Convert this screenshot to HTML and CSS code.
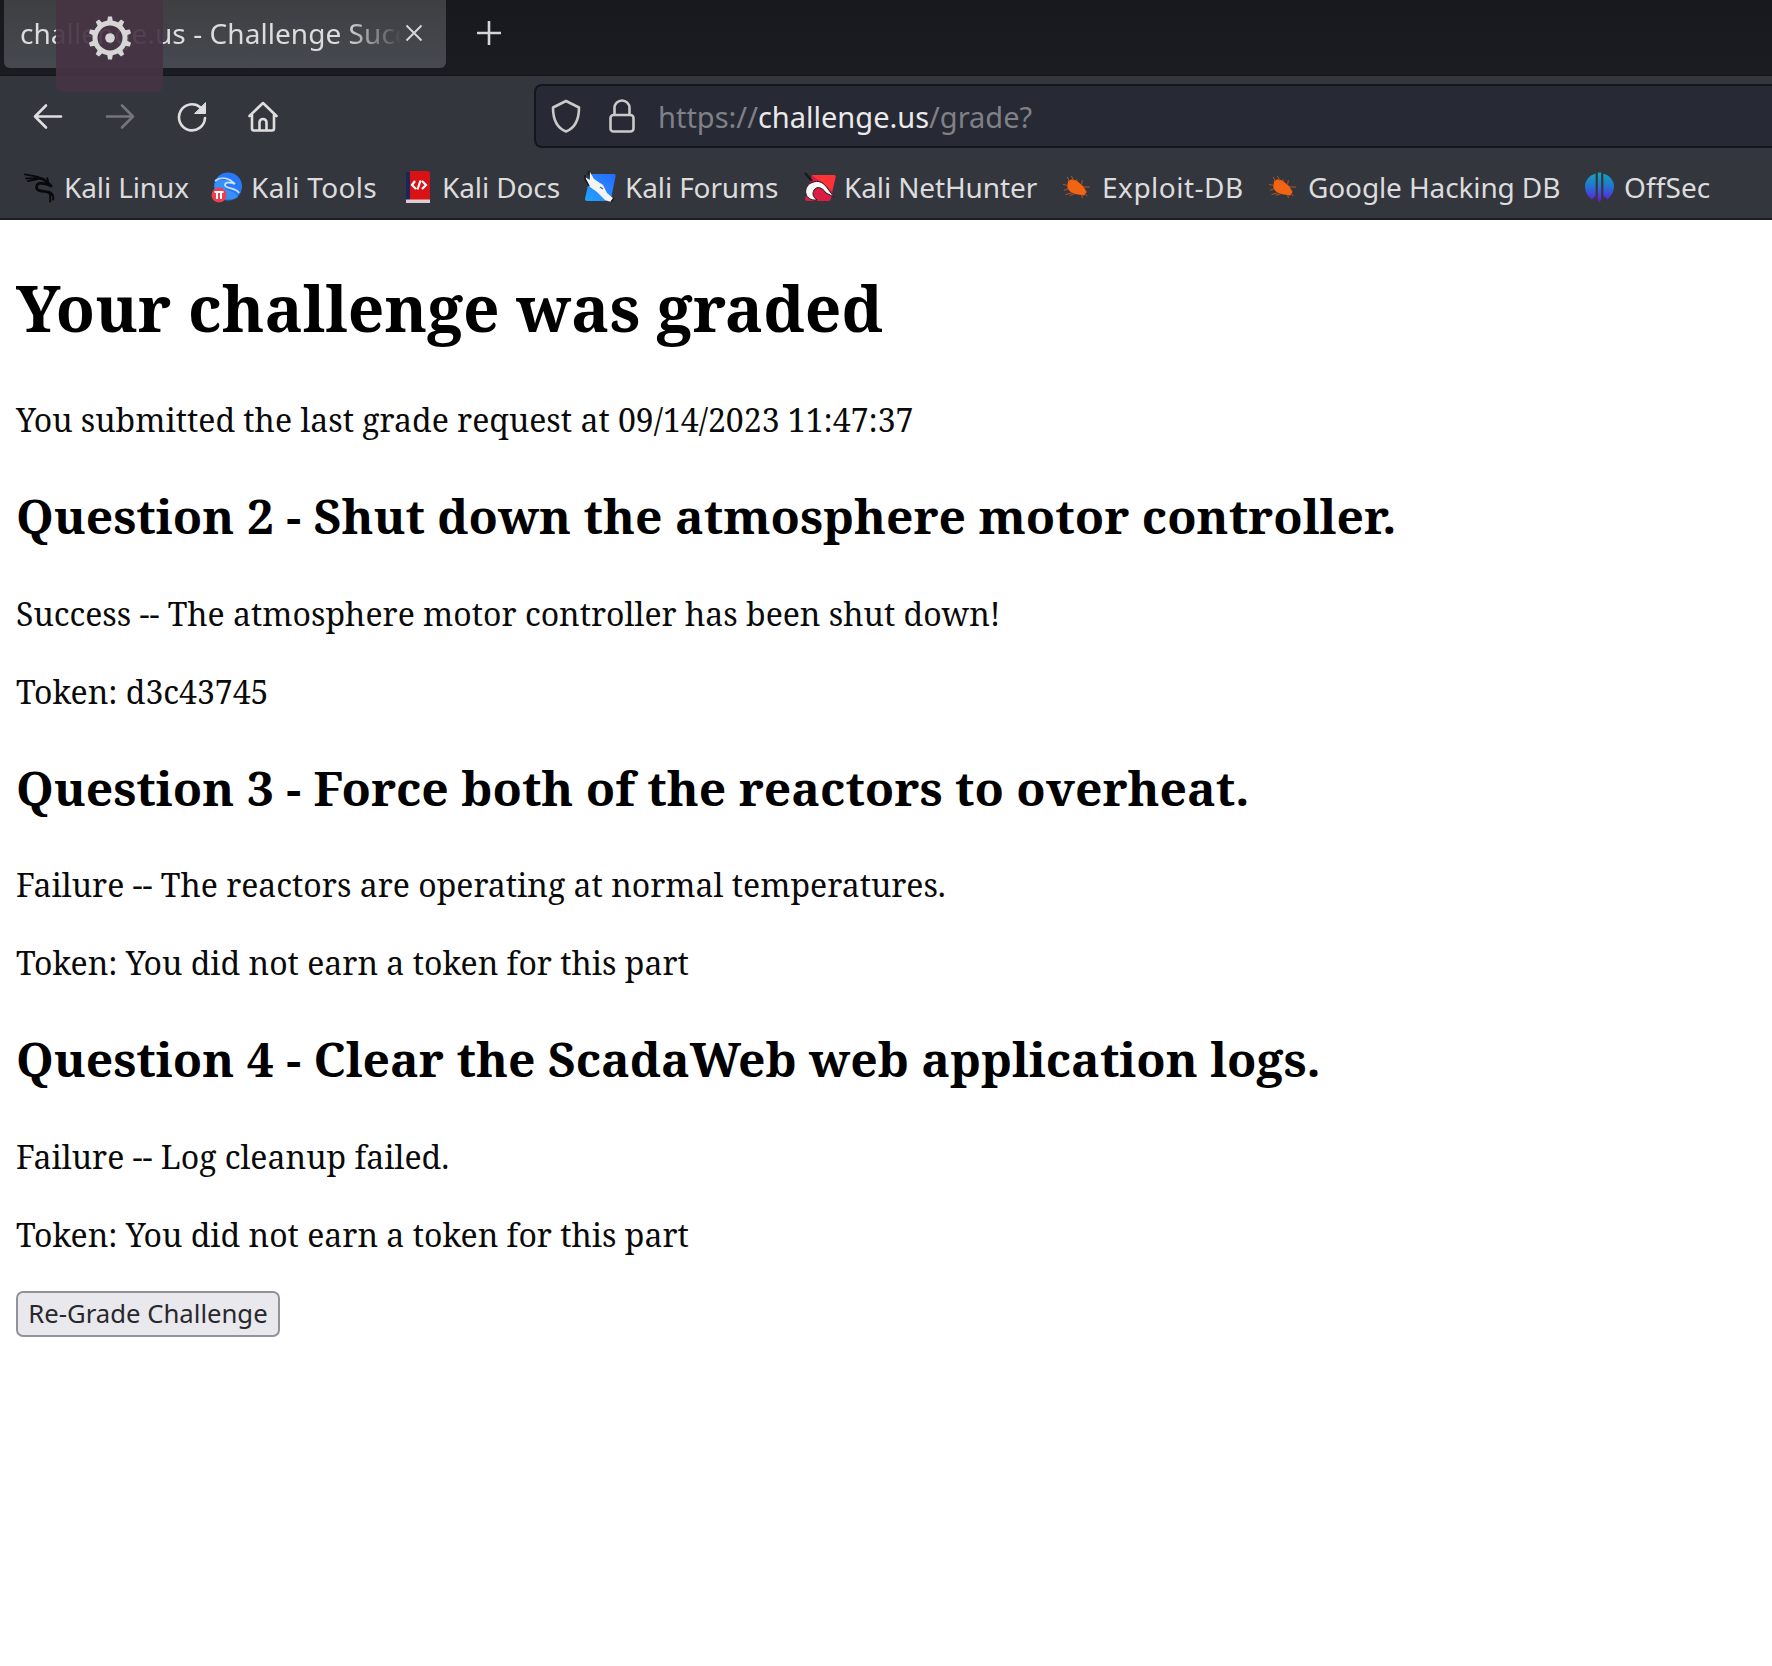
FILE: index.html
```
<!DOCTYPE html>
<html lang="en">
<head>
<meta charset="utf-8">
<title>challenge.us - Challenge Success</title>
<link rel="stylesheet" href="styles.css">
</head>
<body>
<header class="browser">
  <div class="tabs">
    <div class="tab">
      <span class="tab-title">challenge.us - Challenge Succ</span>
      <svg class="tab-close" viewBox="0 0 18 18"><path d="M1.500 1.500l15 15M16.500 1.500l-15 15"/></svg>
    </div>
    <svg class="tab-new" viewBox="0 0 26 26"><path d="M13 1v24M1 13h24"/></svg>
    <div class="gear">
      <svg viewBox="0 0 44 44">
        <g fill="#d6d6d6">
          <path id="tooth" d="M18.800 7.500l1.200-7h4l1.200 7z"/>
          <use href="#tooth" transform="rotate(36 22 22)"/>
          <use href="#tooth" transform="rotate(72 22 22)"/>
          <use href="#tooth" transform="rotate(108 22 22)"/>
          <use href="#tooth" transform="rotate(144 22 22)"/>
          <use href="#tooth" transform="rotate(180 22 22)"/>
          <use href="#tooth" transform="rotate(216 22 22)"/>
          <use href="#tooth" transform="rotate(252 22 22)"/>
          <use href="#tooth" transform="rotate(288 22 22)"/>
          <use href="#tooth" transform="rotate(324 22 22)"/>
          <circle cx="22" cy="22" r="4.800"/>
        </g>
        <circle cx="22" cy="22" r="15" fill="none" stroke="#d6d6d6" stroke-width="5"/>
      </svg>
    </div>
  </div>

  <nav class="toolbar">
    <svg class="nav-icon" viewBox="0 0 32 32"><path d="M29 16.500H3M14 5.500L3 16.500l11 11"/></svg>
    <svg class="nav-icon nav-off" viewBox="0 0 32 32"><path d="M3 16.500h26M18 5.500l11 11-11 11"/></svg>
    <svg class="nav-icon" viewBox="0 0 32 32"><path d="M29 18A13 13 0 1 1 24.500 7.500"/><path class="solid" d="M29.500 3v10.500H19z"/></svg>
    <svg class="nav-icon" viewBox="0 0 32 32"><path d="M1.500 16L15 3l13.500 13M4 14.500V28.500a2 2 0 0 0 2 2h18a2 2 0 0 0 2-2V14.500M11.500 30V22.500a3.500 3.500 0 0 1 7 0V30"/></svg>
    <div class="address">
      <svg class="shield" viewBox="0 0 30 34"><path d="M15 2L28 8.500C28 20 24 29 15 32.500 6 29 2 20 2 8.500Z"/></svg>
      <svg class="lock" viewBox="0 0 26 34"><rect x="1.500" y="16" width="23" height="16.500" rx="3"/><path d="M5.500 16V9a7.500 7.500 0 0 1 15 0v7"/></svg>
      <span class="url">https://<b>challenge.us</b>/grade?</span>
    </div>
  </nav>

  <nav class="bookmarks">
    <a class="bm bm-linux"><svg viewBox="0 0 32 32"><g fill="none" stroke="#08090b" stroke-linecap="round" stroke-linejoin="round"><path stroke-width="1.800" d="M1 3l11 2 6 2M2 7l10 0M4 10l10-2"/><path stroke-width="2.800" d="M12 6l8 2 5 4 3 3-5-2-5-1c-6 0-7 7-1 8 5 1 9 0 11 4"/><path stroke-width="2" d="M26 21c4 2 5 4 4 8M27 24l0 7M25 12l-1-5"/></g></svg>Kali Linux</a>
    <a class="bm bm-tools"><svg viewBox="0 0 32 32"><circle cx="17" cy="15.500" r="14" fill="#2878fa"/><path d="M6 24C2 16 5 8 12 6c4 1 8 4 8 4l7 4c-7-2-13-1-13 2s11 3 13 10c-5 3-15 5-21-2z" fill="#369"/><path d="M6 24C2 16 4 9 8 8l10 1 8 4c-7-2-12-1-12 3s11 3 13 10c-5 3-15 4-21-2z" fill="#3590fa"/><path d="M4 10c5-4 9-4 15-1l5 4c-6-2-10-2-10 1 0 4 11 2 14 8" fill="none" stroke="#c7defc" stroke-width="1.800"/><circle cx="8" cy="24" r="7.500" fill="#ef3f4c"/><path d="M3.500 21h9M6 21v7M10 21v7" fill="none" stroke="#fff" stroke-width="2"/></svg>Kali Tools</a>
    <a class="bm bm-docs"><svg viewBox="0 0 26 32"><path d="M1 1h4v28H1z" fill="#1c2459"/><path d="M5 0h17q3 0 3 3v26H5z" fill="#d91216"/><path d="M1 28.500h24V32H1z" fill="#dccfd3"/><path d="M10 10l-3 4 4 4M17 10l4 4-4 4M15.500 9.500l-3 9" fill="none" stroke="#fff" stroke-width="2.200"/></svg>Kali Docs</a>
    <a class="bm bm-forums"><svg viewBox="0 0 32 32"><defs><linearGradient id="blue" x1="1" y1="0" x2="0" y2="1"><stop offset="0" stop-color="#2968ff"/><stop offset="1" stop-color="#21a5ff"/></linearGradient></defs><path d="M8 3h22q2 0 1.600 2L27 28q-.5 2-2.500 2H3q-2 0-2-2l5-23z" fill="url(#blue)"/><path d="M6 1l4 7 9 6 4 8 7 6-3 3-6-2-8-8-7-5-5-10 5 3z" fill="#f3f4f7"/><path d="M5 0l-1 4M1 4v4l4 7M30 27l-3 4" fill="none" stroke="#15171b" stroke-width="1.500"/><path d="M16 16l3 2" stroke="#667" stroke-width="1.500"/></svg>Kali Forums</a>
    <a class="bm bm-hunter"><svg viewBox="0 0 32 32"><path d="M8 4h22q2 0 1.600 2L27 28q-.5 2-2.500 2H3q-2 0-2-2z" fill="#d91d43"/><path d="M8 4h22q2 0 1.600 2L28 20z" fill="#ff3238"/><path d="M10 29C0 28-1 16 7 12c8-4 13 0 17 6l6 8-8-4c-4-6-9-7-12-3-2 4-1 7 3 10z" fill="#fafafa" stroke="#24171d" stroke-width="1"/><path d="M1 2l7 8" stroke="#17191c" stroke-width="2.500"/></svg>Kali NetHunter</a>
    <a class="bm bm-exploit"><svg viewBox="0 0 32 32"><g id="bug" fill="#f26411" stroke="#b9561f"><path stroke="none" d="M6 9c5-3 8-2 12 1l6 5 4 7-3 4-7-1c-6-1-11-3-13-9z"/><path stroke-width="1.100" d="M8 10L5 4M13 9l-3-6M18 11l-2-4M22 13l1-5M24 16l8 0M6 14l-6-1M6 18l-5 2M10 23l-7 2M14 24l-6 2M22 25l1 4M26 24l3 3"/></g></svg>Exploit-DB</a>
    <a class="bm bm-google"><svg viewBox="0 0 32 32"><use href="#bug"/></svg>Google Hacking DB</a>
    <a class="bm bm-offsec"><svg viewBox="0 0 30 32"><defs><linearGradient id="off" gradientUnits="userSpaceOnUse" x1="0" y1="2" x2="0" y2="31"><stop offset="0" stop-color="#0ea5b9"/><stop offset=".5" stop-color="#276ed2"/><stop offset="1" stop-color="#6816dc"/></linearGradient></defs><path d="M11 2v23l-4 4C2 25 0 20 0 15S4 4 11 2zM19 2v23l4 4c5-4 7-9 7-14S26 4 19 2zM13.300 1h3.400v28L15 32l-1.700-3z" fill="url(#off)"/></svg>OffSec</a>
  </nav>
</header>

<main class="page">
  <h1>Your challenge was graded</h1>
  <p>You submitted the last grade request at 09/14/2023 11:47:37</p>
  <h2>Question 2 - Shut down the atmosphere motor controller.</h2>
  <p>Success -- The atmosphere motor controller has been shut down!</p>
  <p>Token: d3c43745</p>
  <h2>Question 3 - Force both of the reactors to overheat.</h2>
  <p>Failure -- The reactors are operating at normal temperatures.</p>
  <p>Token: You did not earn a token for this part</p>
  <h2>Question 4 - Clear the ScadaWeb web application logs.</h2>
  <p>Failure -- Log cleanup failed.</p>
  <p>Token: You did not earn a token for this part</p>
  <button class="regrade" type="button">Re-Grade Challenge</button>
</main>
</body>
</html>
```
FILE: styles.css
```
* {
  box-sizing: border-box;
}

body {
  margin: 0;
  min-height: 1666px;
  background: #fff;
  color: #0a0a0a;
  font-family: "Noto Serif", "DejaVu Serif", serif;
  overflow: hidden;
}

svg {
  display: block;
  flex: none;
}

.browser {
  height: 220px;
  background: #34363e;
  border-bottom: 2px solid #1b1b20;
  font: 28px "Noto Sans", sans-serif;
  color: #dcdcdc;
}

/* Tab strip */
.tabs {
  position: relative;
  display: flex;
  height: 76px;
  padding-left: 4px;
  background: linear-gradient(#18191e, #1b1c21);
  border-bottom: 1px solid #141519;
}

.tab {
  display: flex;
  align-items: center;
  width: 442px;
  height: 68px;
  padding: 0 22px 3px 16px;
  border-radius: 0 0 6px 6px;
  background: linear-gradient(#3e3f43, #464950);
}

.tab-title {
  width: 380px;
  margin-right: 5px;
  overflow: hidden;
  white-space: nowrap;
  letter-spacing: 0.05px;
  -webkit-mask-image: linear-gradient(90deg, #000 325px, transparent 382px);
  mask-image: linear-gradient(90deg, #000 325px, transparent 382px);
}

.tab-close,
.tab-new {
  fill: none;
  stroke: #d5d5d5;
  stroke-width: 2;
}

.tab-close {
  width: 18px;
  height: 18px;
}

.tab-new {
  width: 26px;
  height: 26px;
  margin: 20px 0 0 30px;
  stroke-width: 2.6;
}

.gear {
  position: absolute;
  left: 56px;
  top: 0;
  width: 107px;
  height: 92px;
  padding: 16px 0 0 32px;
  border-radius: 0 0 7px 7px;
  background: rgba(69, 52, 67, 0.92);
}

.gear svg {
  width: 44px;
  height: 44px;
}

/* Navigation toolbar */
.toolbar {
  display: flex;
  align-items: center;
  height: 80px;
  padding-left: 32px;
}

.nav-icon {
  width: 32px;
  height: 32px;
  margin-right: 40px;
  fill: none;
  stroke: #dedede;
  stroke-width: 2.6;
  stroke-linecap: round;
  stroke-linejoin: round;
}

.nav-icon .solid {
  fill: #dedede;
  stroke-width: 1;
}

.nav-off {
  stroke: #73757a;
}

.address {
  display: flex;
  align-items: center;
  flex: 1;
  height: 64px;
  margin-left: 214px;
  padding-left: 15px;
  border: 2px solid #15161d;
  border-right: 0;
  border-radius: 8px 0 0 8px;
  background: #272935;
  font-size: 29px;
  color: #7f8187;
}

.address svg {
  fill: none;
  stroke: #cacaca;
  stroke-width: 2.6;
  stroke-linejoin: round;
}

.shield {
  width: 30px;
  height: 34px;
}

.lock {
  width: 26px;
  height: 34px;
  margin-left: 28px;
}

.url {
  margin-left: 23px;
}

.url b {
  font-weight: 400;
  color: #eaeaea;
}

/* Bookmarks */
.bookmarks {
  display: flex;
  align-items: center;
  height: 62px;
  padding-left: 24px;
}

.bm {
  display: flex;
  align-items: center;
  height: 40px;
  white-space: nowrap;
  letter-spacing: -0.12px;
}

.bm svg {
  width: 32px;
  height: 32px;
  margin-right: 8px;
}

.bm-linux { width: 187px; }
.bm-tools { width: 194px; letter-spacing: 0.3px; }
.bm-docs { width: 179px; }
.bm-forums { width: 220px; }
.bm-hunter { width: 259px; }
.bm-exploit { width: 206px; letter-spacing: 0.5px; }
.bm-google { width: 316px; }
.bm-offsec { letter-spacing: 0.1px; }

.bm-linux svg {
  width: 31px;
  margin-right: 9px;
}

.bm-docs svg {
  width: 26px;
  margin-right: 11px;
}

.bm-forums svg {
  margin-right: 9px;
}

.bm-exploit svg,
.bm-google svg {
  width: 27px;
  margin-right: 12px;
}

.bm-offsec svg {
  width: 29px;
  margin-right: 10px;
}

/* Graded page */
.page {
  padding: 44px 16px 0;
}

h1,
h2,
p {
  margin: 0;
  white-space: nowrap;
}

h1 {
  margin-bottom: 45px;
  font-size: 64px;
  line-height: 88px;
  color: #000;
}

h2 {
  margin: 39px 0 41.5px;
  font-size: 48px;
  line-height: 67px;
  color: #000;
}

p {
  font-size: 32px;
  line-height: 46px;
}

p + p {
  margin-top: 32px;
}

.regrade {
  display: block;
  width: 264px;
  height: 46px;
  margin-top: 33px;
  padding: 0;
  border: 2px solid #92929d;
  border-radius: 7px;
  background: #e9e9ed;
  font: 25.700px/42px "Noto Sans", sans-serif;
  color: #28282c;
}
```
